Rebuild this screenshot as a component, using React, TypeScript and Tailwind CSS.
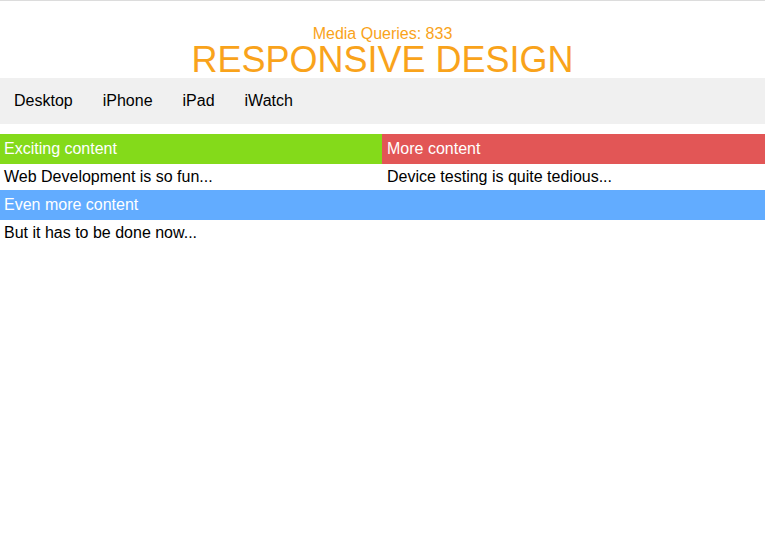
export default function App() {
  const font = { fontFamily: '"Liberation Sans", Arial, sans-serif' }
  return (
    <div className="min-h-screen bg-white border-t border-[#dcdcdc]" style={font}>
      {/* Header */}
      <header className="pt-6 text-center text-[#f9a31b]">
        <div className="text-base leading-[17px]">Media Queries: 833</div>
        <h1 className="text-[36px] leading-[36px]">RESPONSIVE DESIGN</h1>
      </header>

      {/* Nav */}
      <nav className="h-[46px] bg-[#f0f0f0] pl-[14px] pt-[14px] flex gap-[30px] text-base leading-[18px] text-black">
        <a>Desktop</a>
        <a>iPhone</a>
        <a>iPad</a>
        <a>iWatch</a>
      </nav>

      {/* Content */}
      <main className="mt-[10px] grid grid-cols-[382px_1fr] text-base leading-[18px]">
        <div>
          <h2 className="bg-[#84da1a] text-white px-1 py-1.5">Exciting content</h2>
          <p className="px-1 py-1 text-black">Web Development is so fun...</p>
        </div>
        <div>
          <h2 className="bg-[#e25656] text-white px-[5px] py-1.5">More content</h2>
          <p className="px-[5px] py-1 text-black">Device testing is quite tedious...</p>
        </div>
        <div className="col-span-2">
          <h2 className="bg-[#62acff] text-white px-1 py-1.5">Even more content</h2>
          <p className="px-1 py-1 text-black">But it has to be done now...</p>
        </div>
      </main>
    </div>
  )
}
